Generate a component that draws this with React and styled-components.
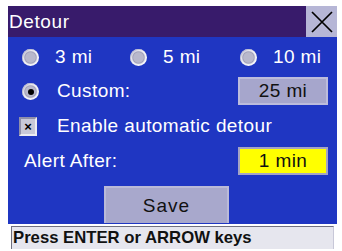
import React from 'react';
import styled, { createGlobalStyle } from 'styled-components';

const GlobalStyle = createGlobalStyle`
	html, body {
		margin: 0;
		padding: 0;
		background: #ffffff;
	}
	body {
		font-family: 'Liberation Sans', Arial, sans-serif;
	}
`;

const Screen = styled.div`
	width: 329px;
	margin: 6px 0 0 8px;
	display: flex;
	flex-direction: column;
`;

const TitleBar = styled.div`
	height: 31px;
	background-color: #381b6b;
	display: flex;
	align-items: center;
	justify-content: space-between;
`;

const Title = styled.span`
	color: #ffffff;
	font-size: 19px;
	letter-spacing: 0.6px;
	padding-left: 1px;
`;

const CloseBox = styled.div`
	width: 31px;
	height: 31px;
	background-color: #b6b6d6;
	display: flex;
	align-items: center;
	justify-content: center;
`;

const Body = styled.div`
	background-color: #1f36c2;
	display: flex;
	flex-direction: column;
	padding-bottom: 1px;
`;

const Row = styled.div`
	height: ${p => p.h}px;
	display: flex;
	align-items: center;
	padding-left: ${p => p.pl || 14}px;
	padding-right: 9px;
`;

const Option = styled.div`
	display: flex;
	align-items: center;
	width: ${p => p.w}px;
`;

const Radio = styled.span`
	width: 17px;
	height: 17px;
	border-radius: 50%;
	box-sizing: border-box;
	background: radial-gradient(circle at 50% 50%, #b8b8cc 0 40%, #a0a0b8 47%, #eeeef4 58%, #ffffff 70%);
	box-shadow: inset 1px 1px 1px rgba(150, 150, 180, 0.6);
	display: flex;
	align-items: center;
	justify-content: center;
	margin-right: ${p => p.gap || 16}px;
	margin-top: 1px;
	flex-shrink: 0;

	&::after {
		content: '';
		width: 6px;
		height: 6px;
		border-radius: 50%;
		background: ${p => (p.checked ? '#000000' : 'transparent')};
	}
`;

const Label = styled.span`
	color: #ffffff;
	font-size: 19px;
	letter-spacing: 0.4px;
	white-space: nowrap;
`;

const Spacer = styled.div`
	flex: 1;
`;

const ValueButton = styled.div`
	width: 90px;
	height: 28px;
	box-sizing: border-box;
	background-color: ${p => (p.yellow ? '#ffff00' : '#a6a6cc')};
	border: 2px solid ${p => (p.yellow ? '#a4a4c4' : '#bcbcdc')};
	color: #111111;
	font-size: 19px;
	letter-spacing: 0.4px;
	display: flex;
	align-items: center;
	justify-content: center;
`;

const CheckBox = styled.span`
	width: 18px;
	height: 19px;
	box-sizing: border-box;
	background-color: #c8c8d8;
	border-top: 2px solid #9090aa;
	border-left: 2px solid #9090aa;
	border-right: 2px solid #ececf2;
	border-bottom: 2px solid #ececf2;
	display: flex;
	align-items: center;
	justify-content: center;
	color: #000000;
	font-size: 13px;
	font-weight: bold;
	line-height: 1;
	margin-right: 20px;
`;

const SaveRow = styled.div`
	display: flex;
	justify-content: center;
	margin-top: 11px;
	padding-right: 12px;
`;

const SaveButton = styled.div`
	width: 125px;
	height: 37px;
	box-sizing: border-box;
	background-color: #a8a8cc;
	border: 2px solid #babad8;
	border-bottom: none;
	color: #111111;
	font-size: 19px;
	letter-spacing: 1px;
	display: flex;
	align-items: center;
	justify-content: center;
`;

const StatusWrap = styled.div`
	background: #ffffff;
	padding: 2px 3px 0 3px;
`;

const StatusBar = styled.div`
	height: 23px;
	box-sizing: border-box;
	background-color: #e6e6ee;
	border-top: 1px solid #707080;
	border-left: 1px solid #707080;
	border-right: 1px solid #c8c8d8;
	display: flex;
	align-items: center;
	padding-left: 1px;
	color: #111111;
	font-size: 16.7px;
	font-weight: bold;
	white-space: nowrap;
`;

const CloseIcon = () => (
	<svg width="24" height="24" viewBox="0 0 24 24">
		<path d="M2 2 L22 22 M22 2 L2 22" stroke="#000000" strokeWidth="1.7" fill="none" />
	</svg>
);

const App = () => {
	return (
		<>
			<GlobalStyle />
			<Screen>
				<TitleBar>
					<Title>Detour</Title>
					<CloseBox>
						<CloseIcon />
					</CloseBox>
				</TitleBar>
				<Body>
					<Row h={40}>
						<Option w={108}>
							<Radio />
							<Label>3 mi</Label>
						</Option>
						<Option w={110}>
							<Radio />
							<Label>5 mi</Label>
						</Option>
						<Option>
							<Radio />
							<Label>10 mi</Label>
						</Option>
					</Row>
					<Row h={28}>
						<Radio checked gap={18} />
						<Label>Custom:</Label>
						<Spacer />
						<ValueButton>25 mi</ValueButton>
					</Row>
					<Row h={42} pl={11}>
						<CheckBox>×</CheckBox>
						<Label>Enable automatic detour</Label>
					</Row>
					<Row h={28} pl={16}>
						<Label>Alert After:</Label>
						<Spacer />
						<ValueButton yellow>1 min</ValueButton>
					</Row>
					<SaveRow>
						<SaveButton>Save</SaveButton>
					</SaveRow>
				</Body>
				<StatusWrap>
					<StatusBar>Press ENTER or ARROW keys</StatusBar>
				</StatusWrap>
			</Screen>
		</>
	);
};

export default App;
